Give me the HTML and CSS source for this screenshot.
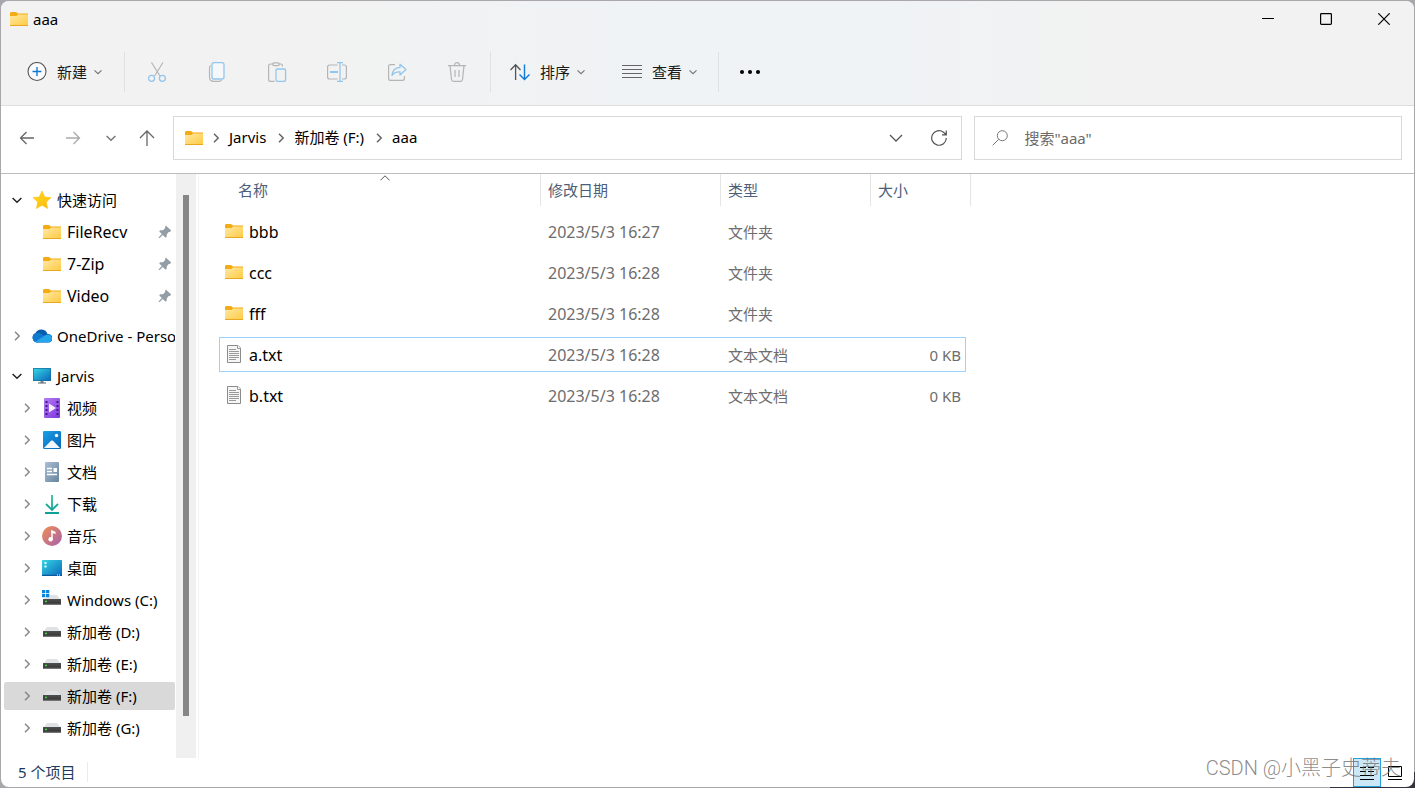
FILE: index.html
```html
<!DOCTYPE html>
<html lang="zh-CN">
<head>
<meta charset="utf-8">
<meta name="viewport" content="width=device-width, initial-scale=1">
<title>aaa</title>
<link rel="stylesheet" href="styles.css">
</head>
<body>
<svg class="sprite" aria-hidden="true">
  <defs>
    <linearGradient id="g-folder" x1="0" y1="0" x2="1" y2="1"><stop offset="0" stop-color="#ffe9a6"/><stop offset="1" stop-color="#ffca3f"/></linearGradient>
    <linearGradient id="g-star" x1="0" y1="0" x2="1" y2="1"><stop offset="0" stop-color="#ffd91f"/><stop offset="1" stop-color="#fdb90c"/></linearGradient>
    <linearGradient id="g-screen" x1="0" y1="0" x2="1" y2="1"><stop offset="0" stop-color="#35d6e2"/><stop offset="1" stop-color="#0b67bd"/></linearGradient>
    <linearGradient id="g-video" x1="0" y1="0" x2="1" y2="1"><stop offset="0" stop-color="#b57cf2"/><stop offset="1" stop-color="#7c35dd"/></linearGradient>
    <linearGradient id="g-picture" x1="0" y1="0" x2="1" y2="1"><stop offset="0" stop-color="#1aa0e8"/><stop offset="1" stop-color="#0564b8"/></linearGradient>
    <linearGradient id="g-doc" x1="0" y1="0" x2="1" y2="1"><stop offset="0" stop-color="#a9bfd4"/><stop offset="1" stop-color="#67849f"/></linearGradient>
    <linearGradient id="g-down" x1="0" y1="0" x2="0" y2="20" gradientUnits="userSpaceOnUse"><stop offset="0" stop-color="#2cc48d"/><stop offset="1" stop-color="#0d9f9b"/></linearGradient>
    <linearGradient id="g-music" x1="0" y1="0" x2="1" y2="1"><stop offset="0" stop-color="#f19050"/><stop offset="1" stop-color="#a75fb0"/></linearGradient>
    <linearGradient id="g-drive" x1="0" y1="0" x2="0" y2="1"><stop offset="0" stop-color="#505050"/><stop offset=".7" stop-color="#3a3a3a"/><stop offset="1" stop-color="#8a8a8a"/></linearGradient>
  </defs>
  <symbol id="i-folder" viewBox="0 0 20 20"><path d="M1 4.500Q1 3 2 3H7L9 4.500H19V8H1Z" fill="#f3ab16"/><path d="M1 7H7.500L9 5.500H19V17H1Z" fill="url(#g-folder)"/><path d="M1 16H19V17H1Z" fill="#e9a820"/></symbol>
  <symbol id="i-star" viewBox="0 0 20 20"><path d="M10 1 12.700 7 19 7.600 14.300 12 15.600 18.500 10 15.200 4.400 18.500 5.700 12 1 7.600 7.300 7Z" fill="url(#g-star)" stroke="#fdbd0d" stroke-width=".6" stroke-linejoin="round"/></symbol>
  <symbol id="i-cloud" viewBox="0 0 20 20"><path d="M5 16.500A5 5 0 0 1 3.500 7A6.500 6.500 0 0 1 15.500 8A4.300 4.300 0 0 1 17 16.500Z" fill="#0a5cad"/><path d="M5 16.500A5 5 0 0 1 3.500 7Q7 6 9.500 8L14 11 7 16.500Z" fill="#0f79cd"/><path d="M3 16 12 10Q14 8 17 8.600Q20 9.800 20 12.500Q19.500 16.500 16 16.500H5Z" fill="#26a5ea"/></symbol>
  <symbol id="i-pc" viewBox="0 0 20 20"><path d="M8.500 14h3v3h-3z" fill="#7c8791"/><path d="M6 16.500h8v1H6z" fill="#59636c"/><rect x="1" y="2" width="18" height="13" rx=".6" fill="#176d9b"/><rect x="1.700" y="2.700" width="16.600" height="11.600" fill="url(#g-screen)"/></symbol>
  <symbol id="i-video" viewBox="0 0 20 20"><rect x="2" y="0" width="16" height="20" rx="1" fill="url(#g-video)"/><path d="M3.500 3h2v2h-2zm0 4h2v2h-2zm0 4h2v2h-2zm0 4h2v2h-2zm11-12h2v2h-2zm0 4h2v2h-2zm0 4h2v2h-2zm0 4h2v2h-2z" fill="#421b80"/><path d="M7 5.500 14 10 7 14.500Z" fill="#f4edff"/></symbol>
  <symbol id="i-picture" viewBox="0 0 20 20"><rect x="1" y="1" width="18" height="18" rx="1.200" fill="url(#g-picture)"/><path d="M2 18 9 10.800Q10 10 11 10.800L18 18Z" fill="#f3f8fd"/><circle cx="14.500" cy="5.500" r="1.700" fill="#fff"/></symbol>
  <symbol id="i-doc" viewBox="0 0 20 20"><rect x="3" y="0" width="14" height="20" rx="1" fill="url(#g-doc)"/><path d="M5 6.500h5M5 9.500h5M5 12.500h10" stroke="#fff" stroke-width="1.300"/><path d="M11.500 6h3.500v4h-3.500z" fill="#fff"/></symbol>
  <symbol id="i-down" viewBox="0 0 20 20"><path d="M10 1V16M4 10l6 6 6-6M3 19H17" fill="none" stroke="url(#g-down)" stroke-width="1.800"/></symbol>
  <symbol id="i-music" viewBox="0 0 20 20"><circle cx="10" cy="10" r="10" fill="url(#g-music)"/><path d="M10 4.500V13" stroke="#fff" stroke-width="1.500"/><path d="M9.300 4.200 13.500 5.800V8L9.300 6.800Z" fill="#fff"/><circle cx="8.600" cy="13.200" r="2.200" fill="#fff"/></symbol>
  <symbol id="i-desktop" viewBox="0 0 20 20"><rect x="0" y="2" width="20" height="16" rx=".8" fill="url(#g-screen)"/><path d="M2.500 4h2v2h-2zm0 3.500h2v2h-2z" fill="#e9ffff"/><path d="M0 16.800h20V18H0z" fill="#0c58a0"/><path d="M15 17h1m1 0h1" stroke="#fff"/></symbol>
  <symbol id="i-drive" viewBox="0 0 20 20"><path d="M5 5H15L19 10H1Z" fill="#dfe2e4"/><rect x="1" y="9" width="18" height="6" fill="url(#g-drive)"/><path d="M3 11.500h2" stroke="#37e03b" stroke-width="1.400"/></symbol>
  <symbol id="i-windrive" viewBox="0 0 20 20"><path d="M5 5H15L19 10H1Z" fill="#dfe2e4"/><rect x="1" y="9" width="18" height="6" fill="url(#g-drive)"/><path d="M3 11.500h2" stroke="#37e03b" stroke-width="1.400"/><path d="M0 0h7.500v7.500H0z" fill="#fff"/><path d="M0 0h3.300v3.300H0zM4 0h3.300v3.300H4zM0 4h3.300v3.300H0zM4 4h3.300v3.300H4z" fill="#0b84dc"/></symbol>
  <symbol id="i-txt" viewBox="0 0 20 20"><path d="M3.500 1.500H14L16.500 4V18.500H3.500Z" fill="#f6f6f6" stroke="#8b8b8b"/><path d="M13.500 1.500V4.500H16.500" fill="#fff" stroke="#9a9a9a"/><path d="M5 5.500H12M5 7.500H15M5 9.500H15M5 11.500H15M5 13.500H15M5 15.500H12" stroke="#999"/></symbol>
  <symbol id="i-pin" viewBox="0 0 14 14"><path d="M8 .8 13.200 5.600 12 7 11 6.800 8.800 9.200 8.600 12 7.400 12.500 4.700 9.900 1.500 13.200.6 12.500 3.800 9 1.300 6.500 2 5.300 5 5.200 7.200 3 7 1.700Z" fill="#929da5"/></symbol>
  <symbol id="i-right" viewBox="0 0 10 10"><path d="M3 .8 7.200 5 3 9.200" fill="none" stroke="currentColor" stroke-width="1.500"/></symbol>
  <symbol id="i-dn" viewBox="0 0 10 10"><path d="M.6 3 5 7.200 9.400 3" fill="none" stroke="currentColor" stroke-width="1.500"/></symbol>
</svg>

<div class="window">
  <header class="chrome">
    <div class="titlebar">
      <svg class="ico"><use href="#i-folder"/></svg>
      <h1 class="title">aaa</h1>
      <div class="caption">
        <button class="cap" aria-label="最小化"><svg viewBox="0 0 12 12"><path d="M0 5.500h12" stroke="#000" fill="none"/></svg></button>
        <button class="cap" aria-label="最大化"><svg viewBox="0 0 12 12"><rect x=".6" y=".6" width="10.800" height="10.800" rx=".8" fill="none" stroke="#000" stroke-width="1.200"/></svg></button>
        <button class="cap" aria-label="关闭"><svg viewBox="0 0 12 12"><path d="M.3.300 11.700 11.700M11.700.300.300 11.700" stroke="#000" stroke-width="1.200" fill="none"/></svg></button>
      </div>
    </div>
    <div class="toolbar" role="toolbar">
      <button class="cmd new"><svg class="ico" viewBox="0 0 20 20" fill="none"><circle cx="10" cy="9.500" r="9" fill="#fbfbfb" stroke="#555" stroke-width="1.100"/><path d="M10 5v9M5.500 9.500h9" stroke="#0f7ad0" stroke-width="1.400"/></svg><span>新建</span><svg class="chev"><use href="#i-dn"/></svg></button>
      <div class="tools">
        <button class="tool" aria-label="剪切" disabled><svg class="ico" viewBox="0 0 20 20" fill="none" stroke="#b5b5b5" stroke-width="1.200"><path d="M4.500.500 13 14M16 .5 7.500 14"/><g stroke="#93c6ec" stroke-width="1.300"><circle cx="4.600" cy="16.300" r="3"/><circle cx="15.400" cy="16.300" r="3"/></g></svg></button>
        <button class="tool" aria-label="复制" disabled><svg class="ico" viewBox="0 0 20 20" fill="none" stroke="#b5b5b5" stroke-width="1.200"><path d="M4 3.500Q2.500 4 2.500 6V15Q2.500 19.400 7 19.400H12Q14 19.400 14.500 18"/><rect x="5" y=".6" width="12" height="16.400" rx="2" fill="#f4f8fb" stroke="#93c6ec" stroke-width="1.300"/></svg></button>
        <button class="tool" aria-label="粘贴" disabled><svg class="ico" viewBox="0 0 20 20" fill="none" stroke="#b5b5b5" stroke-width="1.200"><path d="M6 2H3.500Q1.600 2 1.600 4V17.500Q1.600 19.400 3.500 19.400H7.500M12 2H14Q15.500 2 15.500 4.500"/><rect x="5.600" y=".8" width="6.600" height="2.800" rx="1.400"/><rect x="9" y="7" width="9.600" height="12.400" rx="1.600" stroke="#93c6ec" stroke-width="1.300"/></svg></button>
        <button class="tool" aria-label="重命名" disabled><svg class="ico" viewBox="0 0 20 20" fill="none" stroke="#b5b5b5" stroke-width="1.200"><path d="M10.500 3H2.500Q.6 3 .6 5V15Q.6 17 2.500 17H10.500M15 3H17Q19.400 3 19.400 5V15Q19.400 17 17 17H15"/><path d="M3 10h8" stroke="#93c6ec" stroke-width="2"/><path d="M10 .6h6M10 19.400h6M13 .6v18.800" stroke="#93c6ec" stroke-width="1.300"/></svg></button>
        <button class="tool" aria-label="共享" disabled><svg class="ico" viewBox="0 0 20 20" fill="none" stroke="#b5b5b5" stroke-width="1.200"><path d="M8 2.600H3.500Q1.600 2.600 1.600 4.500V16.500Q1.600 18.400 3.500 18.400H15.500Q17.400 18.400 17.400 16.500V14"/><path d="M13 2.200 19 7.600 13 13V9.800Q7.500 9.500 5 13.500Q5.500 6 13 5.400Z" stroke="#93c6ec" stroke-width="1.300" stroke-linejoin="round"/></svg></button>
        <button class="tool" aria-label="删除" disabled><svg class="ico" viewBox="0 0 20 20" fill="none" stroke="#b5b5b5" stroke-width="1.200"><path d="M1 3.600H19M7.500 3.500Q7.500.7 10 .7T12.500 3.500M3 3.600 4.500 17.500Q4.700 19.400 6.500 19.400H13.500Q15.300 19.400 15.500 17.500L17 3.600M8 8v7M12 8v7"/></svg></button>
      </div>
      <button class="cmd"><svg class="ico" viewBox="0 0 20 20" fill="none" stroke="#555" stroke-width="1.300"><path d="M5.600 18V3M.5 8l5.100-5.200L10.500 8"/><path d="M14.500 2.500v15M9.500 12.500l5 5 5-5" stroke="#0f7ad8" stroke-width="1.400"/></svg><span>排序</span><svg class="chev"><use href="#i-dn"/></svg></button>
      <button class="cmd view"><svg class="ico" viewBox="0 0 20 20" stroke="#666" stroke-width="1.200"><path d="M0 3.500h20M0 7.500h20M0 11.500h20M0 15.500h20"/></svg><span>查看</span><svg class="chev"><use href="#i-dn"/></svg></button>
      <button class="more" aria-label="更多"><svg class="ico" viewBox="0 0 20 20"><circle cx="2" cy="10" r="2"/><circle cx="10" cy="10" r="2"/><circle cx="18" cy="10" r="2"/></svg></button>
    </div>
  </header>

  <nav class="navbar">
    <div class="arrows">
      <button class="nav" aria-label="后退"><svg class="arrow" viewBox="0 0 16 16"><path d="M15 8H1.500M7.500 2 1.500 8l6 6"/></svg></button>
      <button class="nav forward" aria-label="前进"><svg class="arrow" viewBox="0 0 16 16"><path d="M1 8H14.500M8.500 2l6 6-6 6"/></svg></button>
      <button class="nav recent" aria-label="最近位置"><svg class="chev"><use href="#i-dn"/></svg></button>
      <button class="nav up" aria-label="向上"><svg class="arrow" viewBox="0 0 16 16"><path d="M8 16V1M1 8l7-7 7 7"/></svg></button>
    </div>
    <div class="fields">
      <div class="address">
        <svg class="ico"><use href="#i-folder"/></svg>
        <svg class="sep start"><use href="#i-right"/></svg><a href="#">Jarvis</a>
        <svg class="sep"><use href="#i-right"/></svg><a href="#">新加卷 (F:)</a>
        <svg class="sep"><use href="#i-right"/></svg><a href="#">aaa</a>
        <button class="drop" aria-label="历史记录"><svg viewBox="0 0 16 16"><path d="M2 5l6 6 6-6" fill="none" stroke="#555" stroke-width="1.300"/></svg></button>
        <button class="refresh" aria-label="刷新"><svg viewBox="0 0 16 16"><path d="M15.300 8A7.300 7.300 0 1 1 12.500 2.200L15 4.500M15.300.500V4.800H11" fill="none" stroke="#555" stroke-width="1.200"/></svg></button>
      </div>
      <label class="search"><svg viewBox="0 0 16 16" aria-hidden="true"><circle cx="10.300" cy="5.700" r="5" fill="none" stroke="#777"/><path d="M6.700 9.300.700 15.300" stroke="#777"/></svg><input type="text" placeholder='搜索"aaa"' aria-label="搜索"></label>
    </div>
  </nav>

  <div class="body">
    <aside class="sidebar">
      <div class="tree">
        <section class="group">
          <a class="node open" href="#"><svg class="tw"><use href="#i-dn"/></svg><svg class="ico"><use href="#i-star"/></svg><span>快速访问</span></a>
          <a class="node child latin" href="#"><i class="tw"></i><svg class="ico"><use href="#i-folder"/></svg><span>FileRecv</span><svg class="pin"><use href="#i-pin"/></svg></a>
          <a class="node child latin" href="#"><i class="tw"></i><svg class="ico"><use href="#i-folder"/></svg><span>7-Zip</span><svg class="pin"><use href="#i-pin"/></svg></a>
          <a class="node child latin" href="#"><i class="tw"></i><svg class="ico"><use href="#i-folder"/></svg><span>Video</span><svg class="pin"><use href="#i-pin"/></svg></a>
        </section>
        <section class="group">
          <a class="node" href="#"><svg class="tw"><use href="#i-right"/></svg><svg class="ico"><use href="#i-cloud"/></svg><span>OneDrive - Personal</span></a>
        </section>
        <section class="group">
          <a class="node open" href="#"><svg class="tw"><use href="#i-dn"/></svg><svg class="ico"><use href="#i-pc"/></svg><span>Jarvis</span></a>
          <a class="node child" href="#"><svg class="tw"><use href="#i-right"/></svg><svg class="ico"><use href="#i-video"/></svg><span>视频</span></a>
          <a class="node child" href="#"><svg class="tw"><use href="#i-right"/></svg><svg class="ico"><use href="#i-picture"/></svg><span>图片</span></a>
          <a class="node child" href="#"><svg class="tw"><use href="#i-right"/></svg><svg class="ico"><use href="#i-doc"/></svg><span>文档</span></a>
          <a class="node child" href="#"><svg class="tw"><use href="#i-right"/></svg><svg class="ico"><use href="#i-down"/></svg><span>下载</span></a>
          <a class="node child" href="#"><svg class="tw"><use href="#i-right"/></svg><svg class="ico"><use href="#i-music"/></svg><span>音乐</span></a>
          <a class="node child" href="#"><svg class="tw"><use href="#i-right"/></svg><svg class="ico"><use href="#i-desktop"/></svg><span>桌面</span></a>
          <a class="node child" href="#"><svg class="tw"><use href="#i-right"/></svg><svg class="ico"><use href="#i-windrive"/></svg><span>Windows (C:)</span></a>
          <a class="node child" href="#"><svg class="tw"><use href="#i-right"/></svg><svg class="ico"><use href="#i-drive"/></svg><span>新加卷 (D:)</span></a>
          <a class="node child" href="#"><svg class="tw"><use href="#i-right"/></svg><svg class="ico"><use href="#i-drive"/></svg><span>新加卷 (E:)</span></a>
          <a class="node child selected" href="#"><svg class="tw"><use href="#i-right"/></svg><svg class="ico"><use href="#i-drive"/></svg><span>新加卷 (F:)</span></a>
          <a class="node child" href="#"><svg class="tw"><use href="#i-right"/></svg><svg class="ico"><use href="#i-drive"/></svg><span>新加卷 (G:)</span></a>
        </section>
      </div>
      <div class="scrollbar"><div class="thumb"></div></div>
    </aside>
    <main class="files">
      <table class="list">
        <colgroup><col class="c-name"><col class="c-date"><col class="c-type"><col class="c-size"></colgroup>
        <thead>
          <tr><th scope="col"><div class="head first">名称<svg class="caret" viewBox="0 0 10 6"><path d="M.5 5.300 5 .8l4.500 4.500" fill="none" stroke="#555"/></svg></div></th><th scope="col"><div class="head">修改日期</div></th><th scope="col"><div class="head">类型</div></th><th scope="col"><div class="head last">大小</div></th></tr>
        </thead>
        <tbody>
          <tr><td><div class="name"><svg class="ico"><use href="#i-folder"/></svg><span>bbb</span></div></td><td class="latin">2023/5/3 16:27</td><td>文件夹</td><td></td></tr>
          <tr><td><div class="name"><svg class="ico"><use href="#i-folder"/></svg><span>ccc</span></div></td><td class="latin">2023/5/3 16:28</td><td>文件夹</td><td></td></tr>
          <tr><td><div class="name"><svg class="ico"><use href="#i-folder"/></svg><span>fff</span></div></td><td class="latin">2023/5/3 16:28</td><td>文件夹</td><td></td></tr>
          <tr class="focused"><td><div class="name"><svg class="ico"><use href="#i-txt"/></svg><span>a.txt</span></div></td><td class="latin">2023/5/3 16:28</td><td>文本文档</td><td>0 KB</td></tr>
          <tr><td><div class="name"><svg class="ico"><use href="#i-txt"/></svg><span>b.txt</span></div></td><td class="latin">2023/5/3 16:28</td><td>文本文档</td><td>0 KB</td></tr>
        </tbody>
      </table>
    </main>
  </div>

  <footer class="status">
    <span class="count">5 个项目</span>
    <div class="modes">
      <button class="mode active" aria-label="详细信息"><svg viewBox="0 0 16 16" stroke="#000" fill="none"><path d="M1 2.500h6M9 2.500h6M1 6.500h6M9 6.500h6M1 10.500h14M1 14.500h14"/></svg></button>
      <button class="mode" aria-label="大图标"><svg viewBox="0 0 16 16" stroke="#000" fill="none"><path d="M1.500 1.500h13v10h-13zM1 14.500h14"/></svg></button>
    </div>
  </footer>
</div>
<div class="watermark">CSDN @小黑子史蒂夫</div>
</body>
</html>
```

FILE: styles.css
```css
* { box-sizing: border-box; }

body {
  margin: 0;
  height: 100vh;
  padding: 1px;
  position: relative;
  overflow: hidden;
  background: linear-gradient(90deg, #a9a7ab 94%, #34343c 94%) bottom / 100% 16px no-repeat, #a9a7ab;
  color: #000;
  font: 15px/20px "Noto Sans", "Noto Sans CJK SC", sans-serif;
}

button, input { font: inherit; color: inherit; }
button { border: 0; padding: 0; background: none; }
a { color: inherit; text-decoration: none; }
svg { display: block; flex: none; }

.sprite { position: absolute; width: 0; height: 0; }
.ico { width: 20px; height: 20px; }
.chev { width: 8px; height: 8px; color: #777; }

.window {
  height: 100%;
  display: flex;
  flex-direction: column;
  overflow: hidden;
  background: #fff;
  border-radius: 8px;
}

.chrome {
  flex: none;
  background: linear-gradient(90deg, #f2f2f2 22%, #eff3f5 50%, #eff3f5 60%, #f2f2f2 78%);
  border-bottom: 1px solid #dedede;
}

.titlebar { display: flex; align-items: center; height: 38px; padding: 0 1px 2px 8px; }
.title { margin: 0 0 0 4px; font-size: 15px; font-weight: 400; }
.caption { display: flex; align-self: stretch; margin-left: auto; }
.cap { display: grid; place-items: center; width: 58px; }
.cap svg { width: 12px; height: 12px; }

.toolbar { display: flex; align-items: center; height: 66px; color: #1a1a1a; }
.cmd { display: flex; align-items: center; height: 40px; width: 112px; padding-left: 19px; }
.cmd span { margin: 0 7px 0 10px; white-space: nowrap; }
.new { width: 123px; padding-left: 26px; }
.view { width: 115px; }
.tools { display: flex; padding: 0 3px 0 2px; border: 1px solid #e0e1e2; border-width: 0 1px; }
.tool { display: grid; place-items: center; width: 60px; height: 40px; }
.more { display: grid; place-items: center; width: 62px; height: 40px; border-left: 1px solid #dfe2e4; }

.navbar { display: flex; flex: none; align-items: center; height: 68px; padding: 0 12px 3px 0; border-bottom: 1px solid #bdbdbd; }
.arrows { display: flex; flex: none; align-items: center; width: 172px; padding-left: 11px; }
.nav { display: grid; flex: none; place-items: center; width: 30px; height: 36px; margin-right: 16px; }
.nav.forward { margin-right: 8px; }
.nav.recent { margin-right: 6px; }
.nav.up { margin-right: 0; }
.nav.recent .chev { width: 10px; height: 10px; }
.arrow { width: 16px; height: 16px; fill: none; stroke: #666; stroke-width: 1.3; }
.forward .arrow { stroke: #aaa; }

.fields { display: grid; flex: 1; grid-template-columns: 24fr 13fr; gap: 12px; }
.address, .search { display: flex; align-items: center; height: 44px; border: 1px solid #d9d9d9; min-width: 0; }
.address { padding-left: 10px; }
.address a { padding-bottom: 2px; white-space: nowrap; }
.sep { width: 10px; height: 10px; margin: 0 8px 0 10px; color: #666; }
.sep.start { margin-left: 7px; }
.drop, .refresh { display: grid; place-items: center; width: 43px; height: 42px; }
.drop { margin-left: auto; }
.refresh { margin-right: 1px; }
.drop svg, .refresh svg, .search svg { width: 16px; height: 16px; }
.search { padding-left: 17px; }
.search input { flex: 1; min-width: 0; padding: 0 16px; border: 0; outline: 0; background: none; }
.search input::placeholder { color: #6b6b6b; opacity: 1; }

.body { display: flex; flex: 1; min-height: 0; }
.sidebar { display: flex; flex: none; width: 198px; border-right: 1px solid #f3f3f3; }
.tree { display: flex; flex-direction: column; gap: 12px; width: 175px; padding: 12px 1px 0 3px; overflow: hidden; }
.group { display: flex; flex-direction: column; gap: 4px; }
.node { display: flex; align-items: center; height: 28px; padding-left: 8px; border-radius: 2px; overflow: hidden; white-space: nowrap; }
.node.child { padding-left: 18px; }
.node.selected { background: #d9d9d9; }
.node .ico { margin: 0 5px 0 10px; }
.latin { font-size: 16px; }
.tw { flex: none; width: 10px; height: 10px; color: #888; }
.open .tw { color: #222; }
.pin { width: 14px; height: 14px; margin: 0 3px 0 auto; }
.scrollbar { display: flex; justify-content: center; width: 20px; padding: 21px 0 42px; background: #f0f0f0; }
.thumb { width: 6px; background: #868686; }

.files { flex: 1; min-width: 0; padding-left: 20px; overflow: hidden; }
.list { width: 747px; margin-top: -6px; table-layout: fixed; border-collapse: separate; border-spacing: 0 6px; color: #6d6d6d; }
.c-name { width: 322px; }
.c-date { width: 180px; }
.c-type { width: 150px; }
.c-size { width: 95px; }
.list th { height: 34px; padding: 0; text-align: left; vertical-align: top; font-weight: 400; color: #4c607a; }
.head { position: relative; height: 32px; padding: 6px 0 0 7px; border-right: 1px solid #e5e5e5; }
.head.first { padding-left: 19px; }
.head.last { width: 100px; }
.caret { position: absolute; top: 1px; left: 50%; width: 10px; height: 6px; }
.list td { height: 35px; padding: 0 5px 0 7px; border: 0 solid transparent; border-width: 1px 0; white-space: nowrap; }
.list td:first-child { padding-left: 4px; border-left-width: 1px; }
.list td:last-child { padding-right: 4px; text-align: right; border-right-width: 1px; }
.list .focused td { border-color: #99d1ff; }
.name { display: flex; align-items: center; gap: 5px; color: #000; font-size: 16px; }
.name .ico { margin-bottom: 1px; }

.status { display: flex; flex: none; align-items: center; height: 29px; padding: 0 5px 0 17px; color: #1f3b5c; }
.count { margin-bottom: 2px; padding-right: 12px; border-right: 1px solid #ececec; }
.modes { display: flex; margin-left: auto; }
.mode { display: grid; place-items: center; width: 28px; height: 29px; }
.mode.active { background: #cce8f6; border: 1px solid #26a0da; }
.mode svg { width: 16px; height: 16px; }

.watermark {
  position: absolute;
  right: 14px;
  bottom: 6px;
  color: rgba(110, 110, 110, .8);
  font: 300 20px/28px Roboto, "Noto Sans CJK SC", sans-serif;
  white-space: nowrap;
  pointer-events: none;
}
```
